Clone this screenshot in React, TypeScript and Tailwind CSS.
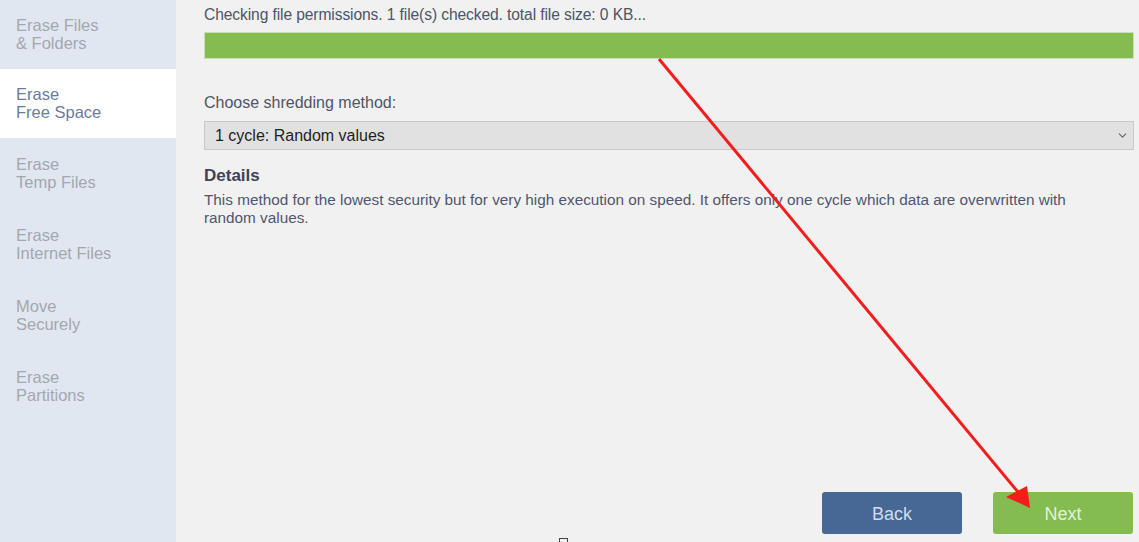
import { ChevronDown } from 'lucide-react'

const navItems = [
  { top: 'Erase Files', bottom: '& Folders', h: 'h-[69px]' },
  { top: 'Erase', bottom: 'Free Space', h: 'h-[69px]', active: true },
  { top: 'Erase', bottom: 'Temp Files', h: 'h-[71px]' },
  { top: 'Erase', bottom: 'Internet Files', h: 'h-[71px]' },
  { top: 'Move', bottom: 'Securely', h: 'h-[71px]' },
  { top: 'Erase', bottom: 'Partitions', h: 'h-[71px]' },
]

export default function App() {
  return (
    <div className="relative flex h-[542px] w-[1139px] overflow-hidden bg-[#f1f1f1] font-['Liberation_Sans',Arial,sans-serif]">
      {/* sidebar */}
      <aside className="flex w-[176px] shrink-0 flex-col bg-[#e1e7f1]">
        {navItems.map((item) => (
          <div
            key={item.bottom}
            className={
              (item.active ? 'bg-white text-[#6b7ba0] ' : 'text-[#a3a7ae] ') +
              item.h +
              ' flex flex-col justify-center pb-[2px] pl-4 text-[16.5px] leading-[18px]'
            }
          >
            <span>{item.top}</span>
            <span>{item.bottom}</span>
          </div>
        ))}
      </aside>

      {/* main panel */}
      <main className="flex flex-1 flex-col pl-[28px] pr-[5px] pt-[6px]">
        <p className="text-[15.6px] leading-[18px] tracking-[-0.1px] text-[#4d5566]">
          Checking file permissions. 1 file(s) checked. total file size: 0 KB...
        </p>
        <div className="mt-[8px] h-[27px] border border-[#c9e0b4] bg-[#84bc52]" />

        <p className="mt-[35px] text-[16px] leading-[18px] text-[#4d5566]">
          Choose shredding method:
        </p>
        <div className="mt-[9px] flex h-[29px] items-center justify-between border border-[#c8c8c8] bg-[#e1e1e1] pl-[10px] pr-[4px]">
          <span className="text-[16px] text-[#1e1e1e]">1 cycle: Random values</span>
          <ChevronDown size={13} strokeWidth={2} className="text-[#666]" />
        </div>

        <h3 className="mt-[16px] text-[17px] font-bold leading-[20px] text-[#3e4453]">Details</h3>
        <p className="mt-[5px] w-[880px] text-[15.3px] leading-[18px] text-[#4f5670]">
          This method for the lowest security but for very high execution on speed. It offers only one cycle which data are overwritten with random values.
        </p>

        <div className="mt-auto mb-[8px] flex justify-end gap-[31px] pr-[1px]">
          <button className="h-[42px] w-[140px] rounded-[3px] bg-[#476794] pt-[2px] text-[18px] text-[#d2ddeb]">
            Back
          </button>
          <button className="h-[42px] w-[140px] rounded-[3px] bg-[#84bc52] pt-[2px] text-[18px] text-[#e4f1d6]">
            Next
          </button>
        </div>
      </main>

      {/* red annotation arrow */}
      <svg className="pointer-events-none absolute inset-0" width="1139" height="542">
        <line x1="659" y1="59" x2="1018" y2="492" stroke="#f41c1c" strokeWidth="3" />
        <polygon points="1030,508 1006,497 1027,486" fill="#f41c1c" />
      </svg>

      <div className="absolute left-[559px] top-[538px] h-[6px] w-[9px] border border-[#444]" />
    </div>
  )
}
